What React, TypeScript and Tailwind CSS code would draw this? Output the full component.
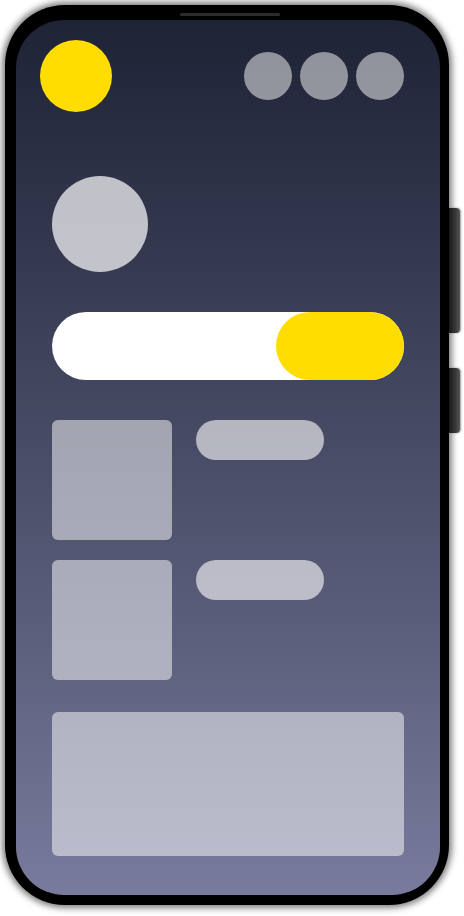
export default function App() {
  return (
    <div className="relative h-[916px] w-[464px] overflow-hidden bg-white">
      <div className="pl-[5px] pt-[5px]">
        {/* phone body */}
        <div className="relative h-[900px] w-[444px] rounded-[60px] bg-black pb-[10px] pl-[11px] pr-[9px] pt-[15px] shadow-[0_0_6px_3px_rgba(0,0,0,0.5)]">
          <div className="absolute left-[175px] top-[8px] h-[3px] w-[100px] rounded-full bg-[#2c2c2c]" />
          <div className="absolute -right-[11px] top-[203px] h-[125px] w-[11px] rounded-r-[4px] bg-gradient-to-r from-[#1a1a1a] via-[#333333] to-[#555555] shadow-[1px_0_2px_rgba(0,0,0,0.4)]" />
          <div className="absolute -right-[11px] top-[363px] h-[65px] w-[11px] rounded-r-[4px] bg-gradient-to-r from-[#1a1a1a] via-[#333333] to-[#555555] shadow-[1px_0_2px_rgba(0,0,0,0.4)]" />

          {/* screen */}
          <div className="flex h-full w-full flex-col overflow-hidden rounded-[48px] bg-gradient-to-b from-[#1f2336] to-[#787b9c] px-[36px]">
            <div className="-ml-[12px] mt-[20px] flex h-[72px] items-center justify-between">
              <div className="h-[72px] w-[72px] rounded-full bg-[#ffdd00]" />
              <div className="flex gap-[8px]">
                <div className="h-[48px] w-[48px] rounded-full bg-white/50" />
                <div className="h-[48px] w-[48px] rounded-full bg-white/50" />
                <div className="h-[48px] w-[48px] rounded-full bg-white/50" />
              </div>
            </div>

            <div className="mt-[64px] h-[96px] w-[96px] rounded-full bg-white/70" />

            <div className="mt-[40px] flex h-[68px] justify-end rounded-full bg-white">
              <div className="h-full w-[128px] rounded-full bg-[#ffdd00]" />
            </div>

            <div className="mt-[40px] flex flex-col gap-[20px]">
              <div className="flex gap-[24px]">
                <div className="h-[120px] w-[120px] rounded-md bg-white/50" />
                <div className="h-[40px] w-[128px] rounded-full bg-white/60" />
              </div>
              <div className="flex gap-[24px]">
                <div className="h-[120px] w-[120px] rounded-md bg-white/50" />
                <div className="h-[40px] w-[128px] rounded-full bg-white/60" />
              </div>
            </div>

            <div className="mt-[32px] h-[144px] rounded-md bg-white/50" />
          </div>
        </div>
      </div>
    </div>
  );
}
